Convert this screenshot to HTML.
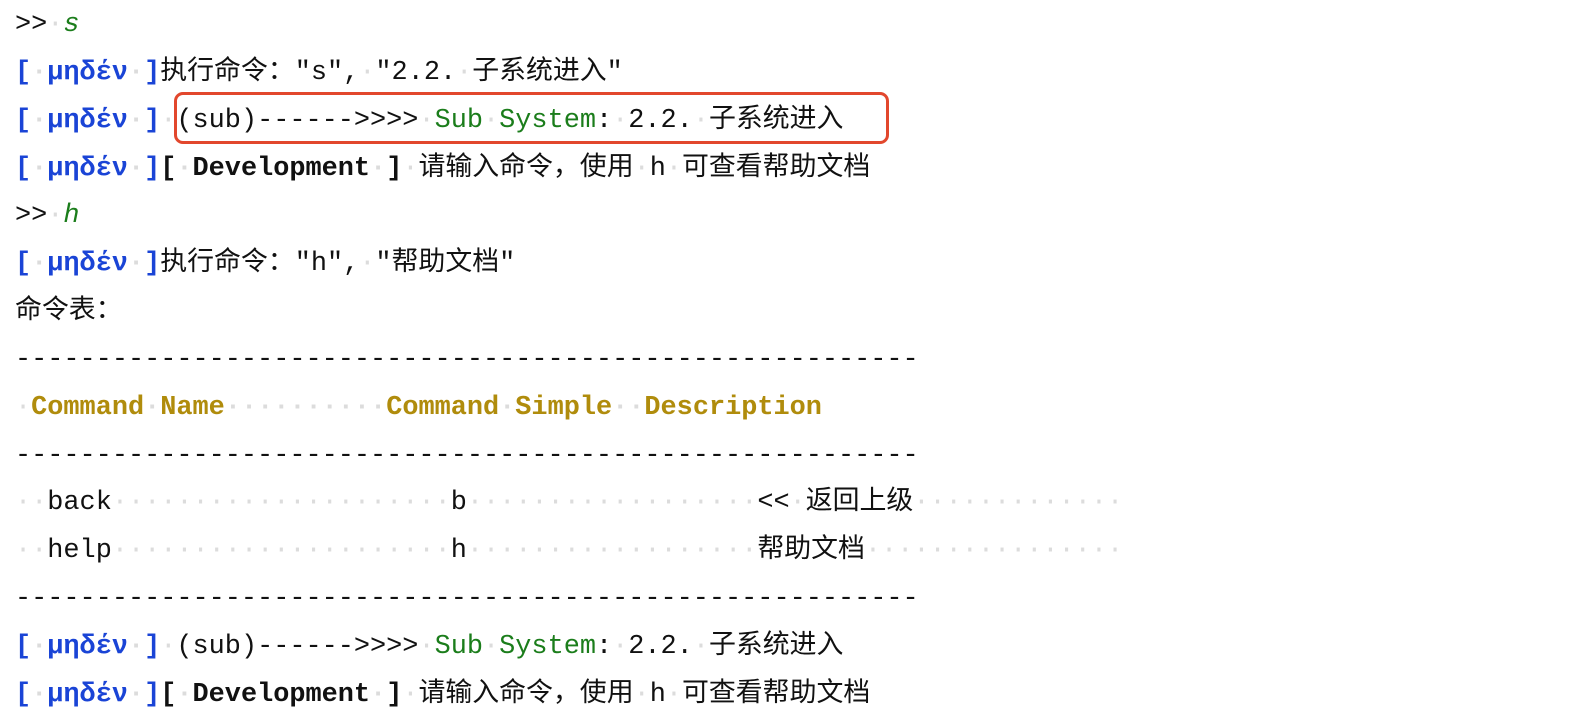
<!DOCTYPE html>
<html><head><meta charset="utf-8"><style>
html,body{margin:0;padding:0;background:#fff;width:1582px;height:718px;overflow:hidden}
.t{position:absolute;left:15px;top:2px;font-family:"Liberation Mono","Noto Sans CJK SC",monospace;font-size:26.9px;line-height:47.85px;color:#111;white-space:pre}
.b{color:#1a44d6;font-weight:bold}
.g{color:#1b7d1b}
.i{font-style:italic}
.y{color:#b08c0c;font-weight:bold}
.k{font-weight:bold}
.d{color:#dcdcdc}
.box{position:absolute;left:174px;top:92px;width:709px;height:46px;border:3px solid #e2472d;border-radius:9px}
</style></head><body>
<div class="box"></div>
<div class="t"><div>&gt;&gt;<span class="d">·</span><span class="g i">s</span></div><div><span class="b">[<span class="d">·</span>μηδέν<span class="d">·</span>]</span>执行命令："s",<span class="d">·</span>"2.2.<span class="d">·</span>子系统进入"</div><div><span class="b">[<span class="d">·</span>μηδέν<span class="d">·</span>]</span><span class="d">·</span>(sub)------&gt;&gt;&gt;&gt;<span class="d">·</span><span class="g">Sub<span class="d">·</span>System</span>:<span class="d">·</span>2.2.<span class="d">·</span>子系统进入</div><div><span class="b">[<span class="d">·</span>μηδέν<span class="d">·</span>]</span><span class="k">[<span class="d">·</span>Development<span class="d">·</span>]</span><span class="d">·</span>请输入命令，使用<span class="d">·</span>h<span class="d">·</span>可查看帮助文档</div><div>&gt;&gt;<span class="d">·</span><span class="g i">h</span></div><div><span class="b">[<span class="d">·</span>μηδέν<span class="d">·</span>]</span>执行命令："h",<span class="d">·</span>"帮助文档"</div><div>命令表：</div><div>--------------------------------------------------------</div><div><span class="d">·</span><span class="y">Command<span class="d">·</span>Name<span class="d">··········</span>Command<span class="d">·</span>Simple<span class="d">··</span>Description</span></div><div>--------------------------------------------------------</div><div><span class="d">··</span>back<span class="d">·····················</span>b<span class="d">··················</span>&lt;&lt;<span class="d">·</span>返回上级<span class="d">·············</span></div><div><span class="d">··</span>help<span class="d">·····················</span>h<span class="d">··················</span>帮助文档<span class="d">················</span></div><div>--------------------------------------------------------</div><div><span class="b">[<span class="d">·</span>μηδέν<span class="d">·</span>]</span><span class="d">·</span>(sub)------&gt;&gt;&gt;&gt;<span class="d">·</span><span class="g">Sub<span class="d">·</span>System</span>:<span class="d">·</span>2.2.<span class="d">·</span>子系统进入</div><div><span class="b">[<span class="d">·</span>μηδέν<span class="d">·</span>]</span><span class="k">[<span class="d">·</span>Development<span class="d">·</span>]</span><span class="d">·</span>请输入命令，使用<span class="d">·</span>h<span class="d">·</span>可查看帮助文档</div></div>
</body></html>
